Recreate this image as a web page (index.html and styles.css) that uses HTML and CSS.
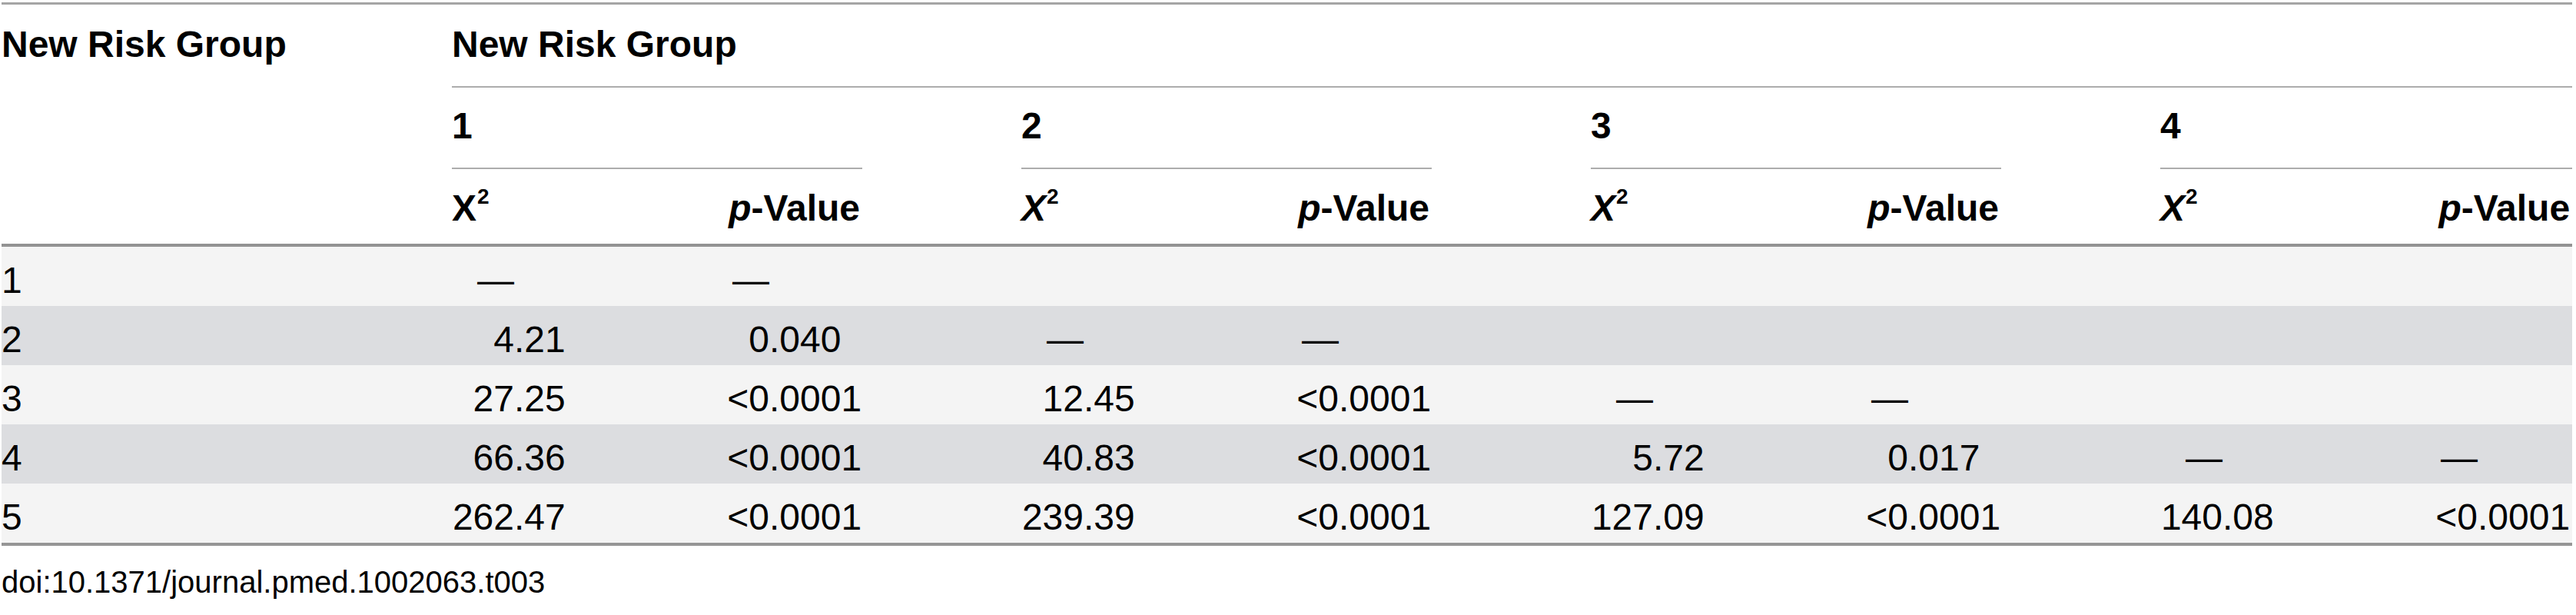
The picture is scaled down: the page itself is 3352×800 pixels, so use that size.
FILE: index.html
```html
<!DOCTYPE html>
<html lang="en">
<head>
<meta charset="utf-8">
<title>New Risk Group comparison</title>
<link rel="stylesheet" href="styles.css">
</head>
<body>
<div class="wrap">
<table class="risk">
<colgroup>
<col class="c-lab">
<col class="c-x"><col class="c-p">
<col class="c-xg"><col class="c-p">
<col class="c-xg"><col class="c-p">
<col class="c-xg"><col class="c-plast">
</colgroup>
<thead>
<tr class="ha">
<th class="lab" rowspan="3">New Risk Group</th>
<th class="span" colspan="8">New Risk Group</th>
</tr>
<tr class="hb">
<th colspan="2"><div class="ul">1</div></th>
<th colspan="2" class="g"><div class="ul">2</div></th>
<th colspan="2" class="g"><div class="ul">3</div></th>
<th colspan="2" class="g"><div class="ul">4</div></th>
</tr>
<tr class="hc">
<th class="x">X<sup>2</sup></th><th class="p"><i>p</i>-Value</th>
<th class="x g"><i>X</i><sup>2</sup></th><th class="p"><i>p</i>-Value</th>
<th class="x g"><i>X</i><sup>2</sup></th><th class="p"><i>p</i>-Value</th>
<th class="x g"><i>X</i><sup>2</sup></th><th class="p"><i>p</i>-Value</th>
</tr>
</thead>
<tbody>
<tr>
<td class="lab">1</td>
<td class="x"><span class="ix">—</span></td><td class="p"><span class="ip">—</span></td>
<td class="x g"></td><td class="p"></td>
<td class="x g"></td><td class="p"></td>
<td class="x g"></td><td class="p"></td>
</tr>
<tr>
<td class="lab">2</td>
<td class="x"><span class="ix">4</span>.21</td><td class="p"><span class="ip">0</span>.040</td>
<td class="x g"><span class="ix">—</span></td><td class="p"><span class="ip">—</span></td>
<td class="x g"></td><td class="p"></td>
<td class="x g"></td><td class="p"></td>
</tr>
<tr>
<td class="lab">3</td>
<td class="x"><span class="ix">27</span>.25</td><td class="p"><span class="ip">&lt;0</span>.0001</td>
<td class="x g"><span class="ix">12</span>.45</td><td class="p"><span class="ip">&lt;0</span>.0001</td>
<td class="x g"><span class="ix">—</span></td><td class="p"><span class="ip">—</span></td>
<td class="x g"></td><td class="p"></td>
</tr>
<tr>
<td class="lab">4</td>
<td class="x"><span class="ix">66</span>.36</td><td class="p"><span class="ip">&lt;0</span>.0001</td>
<td class="x g"><span class="ix">40</span>.83</td><td class="p"><span class="ip">&lt;0</span>.0001</td>
<td class="x g"><span class="ix">5</span>.72</td><td class="p"><span class="ip">0</span>.017</td>
<td class="x g"><span class="ix">—</span></td><td class="p"><span class="ip">—</span></td>
</tr>
<tr>
<td class="lab">5</td>
<td class="x"><span class="ix">262</span>.47</td><td class="p"><span class="ip">&lt;0</span>.0001</td>
<td class="x g"><span class="ix">239</span>.39</td><td class="p"><span class="ip">&lt;0</span>.0001</td>
<td class="x g"><span class="ix">127</span>.09</td><td class="p"><span class="ip">&lt;0</span>.0001</td>
<td class="x g"><span class="ix">140</span>.08</td><td class="p"><span class="ip">&lt;0</span>.0001</td>
</tr>
</tbody>
</table>
<p class="doi">doi:10.1371/journal.pmed.1002063.t003</p>
</div>
</body>
</html>
```

FILE: styles.css
```css
* { box-sizing: border-box; }

html, body {
  margin: 0;
  background: #ffffff;
}

body {
  padding: 3px 0 0 2px;
  font-family: "Liberation Sans", Arial, Helvetica, sans-serif;
  color: #000000;
}

.risk {
  border-collapse: separate;
  border-spacing: 0;
  table-layout: fixed;
  width: 3345px;
  border-top: 3px solid #a5a5a5;
  border-bottom: 4px solid #969696;
  font-size: 48px;
  line-height: 55px;
}

.c-lab { width: 586px; }
.c-x { width: 267px; }
.c-p { width: 267px; }
.c-xg { width: 474px; }
.c-plast { width: 269px; }

.risk th,
.risk td {
  padding: 0;
  text-align: left;
  vertical-align: top;
  white-space: nowrap;
}

.risk th { font-weight: bold; }
.risk td { font-weight: normal; }

.risk .g { padding-left: 207px; }

/* header row A */
.ha th {
  padding-top: 24px;
  padding-bottom: 27px;
}
.ha .span { border-bottom: 2px solid #adadad; }
.ha .lab {
  padding-bottom: 0;
  border-bottom: 4px solid #939393;
}

/* header row B */
.hb th { padding-top: 22px; }
.hb .ul {
  padding-bottom: 27px;
  border-bottom: 2px solid #adadad;
}

/* header row C */
.hc th {
  padding-top: 23px;
  padding-bottom: 19px;
  border-bottom: 4px solid #939393;
}
.hc .p {
  text-align: right;
  padding-right: 3px;
}

.risk sup {
  font-size: 28px;
  line-height: 0;
  vertical-align: 22px;
  margin-left: 1px;
}

/* body rows */
.risk tbody td {
  padding-top: 16px;
  padding-bottom: 6px;
}
.risk tbody tr:nth-child(odd) { background: #f4f4f4; }
.risk tbody tr:nth-child(even) { background: #dcdde0; }

.ix {
  display: inline-block;
  width: 81px;
  text-align: right;
}
.ip {
  display: inline-block;
  width: 146px;
  text-align: right;
}

.doi {
  margin: 24px 0 0 0;
  font-size: 40px;
  line-height: 46px;
}
```
